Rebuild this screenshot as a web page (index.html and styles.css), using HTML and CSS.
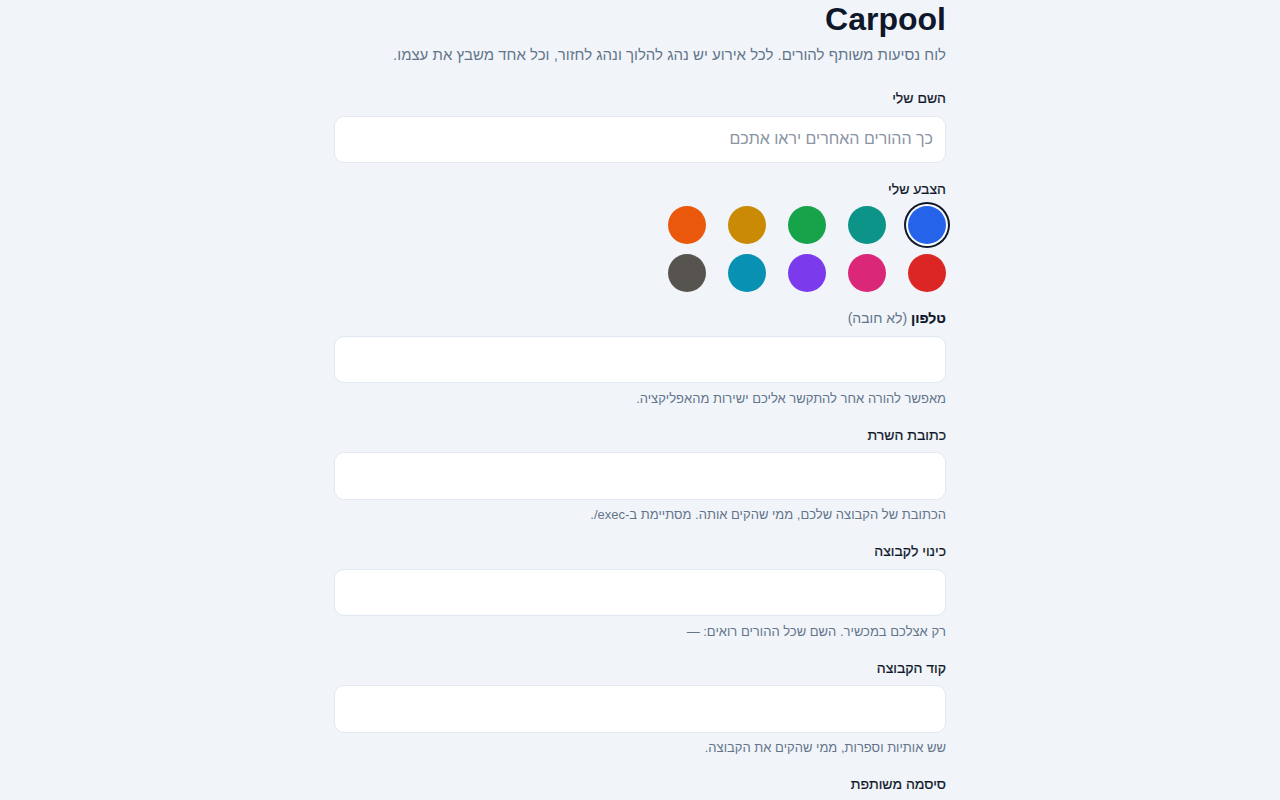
FILE: index.html
```html
<!DOCTYPE html>
<html lang="he" dir="rtl">
<head>
    <meta charset="UTF-8">
    <meta name="viewport" content="width=device-width, initial-scale=1.0">
    <title>Carpool</title>
    <link rel="stylesheet" href="styles.css">
</head>
<body>

<main class="page">
    <h1 class="title">Carpool</h1>
    <p class="subtitle">לוח נסיעות משותף להורים. לכל אירוע יש נהג להלוך ונהג לחזור, וכל אחד משבץ את עצמו.</p>

    <div class="field field-short">
        <label class="label" for="name">השם שלי</label>
        <input class="input" id="name" type="text" placeholder="כך ההורים האחרים יראו אתכם">
    </div>

    <div class="field field-short">
        <span class="label label-tight">הצבע שלי</span>
        <div class="colors">
            <button class="swatch selected" style="background: #2563eb"></button>
            <button class="swatch" style="background: #0d9488"></button>
            <button class="swatch" style="background: #16a34a"></button>
            <button class="swatch" style="background: #ca8a04"></button>
            <button class="swatch" style="background: #ea580c"></button>
            <button class="swatch" style="background: #dc2626"></button>
            <button class="swatch" style="background: #db2777"></button>
            <button class="swatch" style="background: #7c3aed"></button>
            <button class="swatch" style="background: #0891b2"></button>
            <button class="swatch" style="background: #57534e"></button>
        </div>
    </div>

    <div class="field">
        <label class="label" for="phone"><b>טלפון</b> <span class="optional">(לא חובה)</span></label>
        <input class="input" id="phone" type="tel">
        <p class="help">מאפשר להורה אחר להתקשר אליכם ישירות מהאפליקציה.</p>
    </div>

    <div class="field">
        <label class="label" for="server">כתובת השרת</label>
        <input class="input" id="server" type="url">
        <p class="help">הכתובת של הקבוצה שלכם, ממי שהקים אותה. מסתיימת ב-exec/.</p>
    </div>

    <div class="field">
        <label class="label" for="nick">כינוי לקבוצה</label>
        <input class="input" id="nick" type="text">
        <p class="help">רק אצלכם במכשיר. השם שכל ההורים רואים: —</p>
    </div>

    <div class="field">
        <label class="label" for="code">קוד הקבוצה</label>
        <input class="input" id="code" type="text">
        <p class="help">שש אותיות וספרות, ממי שהקים את הקבוצה.</p>
    </div>

    <div class="field">
        <label class="label" for="pass">סיסמה משותפת</label>
        <input class="input" id="pass" type="password">
    </div>
</main>

</body>
</html>
```

FILE: styles.css
```css
body {
    font-family: 'Liberation Sans', Arial, sans-serif;
    margin: 0;
    padding: 0;
    background-color: #f1f5f9;
    color: #0f172a;
}
.page {
    width: 612px;
    margin: 0 auto;
}
.title {
    margin: 0;
    font-size: 32px;
    line-height: 38px;
    font-weight: 700;
    color: #0f172a;
}
.subtitle {
    margin: 6px 0 22px;
    font-size: 15px;
    line-height: 22px;
    color: #64748b;
}
.field {
    display: flex;
    flex-direction: column;
    margin-bottom: 17px;
}
.field-short {
    margin-bottom: 16px;
}
.label {
    font-size: 14px;
    line-height: 20px;
    font-weight: 500;
    color: #0f172a;
    margin-bottom: 7.5px;
    -webkit-text-stroke: 0.2px #0f172a;
}
.label-tight {
    margin-bottom: 7px;
}
.label b {
    font-weight: 700;
}
.optional {
    font-weight: 400;
    color: #64748b;
    -webkit-text-stroke: 0;
}
.input {
    height: 47.5px;
    box-sizing: border-box;
    border: 1px solid #e2e8f0;
    border-radius: 10px;
    background: #fff;
    padding: 0 12px;
    font-family: inherit;
    font-size: 16px;
    color: #0f172a;
}
.input::placeholder {
    color: #8a94a3;
}
.help {
    margin: 6.5px 0 0;
    font-size: 13px;
    line-height: 18px;
    color: #64748b;
}
.colors {
    display: grid;
    grid-template-columns: repeat(5, 38px);
    gap: 10px 22px;
}
.swatch {
    width: 38px;
    height: 38px;
    border-radius: 50%;
    border: none;
    padding: 0;
    cursor: pointer;
}
.swatch.selected {
    box-shadow: 0 0 0 2px #fff, 0 0 0 4px #0f172a;
}
```
